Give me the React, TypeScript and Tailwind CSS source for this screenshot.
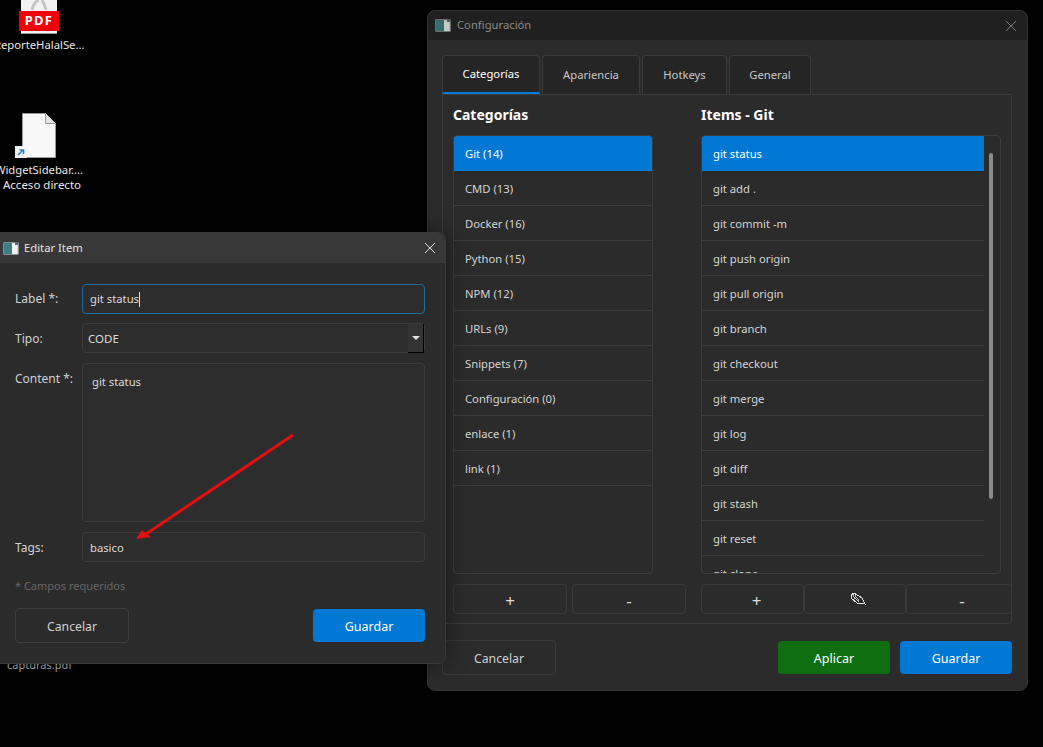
const font = "font-['Noto_Sans',sans-serif]";

const categories = ["Git (14)", "CMD (13)", "Docker (16)", "Python (15)", "NPM (12)", "URLs (9)", "Snippets (7)", "Configuración (0)", "enlace (1)", "link (1)"];
const items = ["git status", "git add .", "git commit -m", "git push origin", "git pull origin", "git branch", "git checkout", "git merge", "git log", "git diff", "git stash", "git reset", "git clone"];
const tabs = [
  { label: "Categorías", w: "w-[98px]", active: true },
  { label: "Apariencia", w: "w-[98px]", active: false },
  { label: "Hotkeys", w: "w-[85px]", active: false },
  { label: "General", w: "w-[82px]", active: false },
];

function WinIcon({ dim }: { dim?: boolean }) {
  return (
    <svg width="16" height="13" viewBox="0 0 16 13" className={dim ? "shrink-0 opacity-80" : "shrink-0"}>
      <rect x="0.5" y="0.5" width="15" height="12" fill="#d9dde0" />
      <rect x="1" y="1" width="8" height="11" fill="#3b7f84" />
      <rect x="9" y="2" width="5" height="10" fill="#f1f3f4" />
      <rect x="12" y="0" width="3" height="3" fill="#5a6a70" />
    </svg>
  );
}

function CloseX({ color }: { color: string }) {
  return (
    <svg width="12" height="12" viewBox="0 0 12 12" fill="none" stroke={color} strokeWidth="1">
      <path d="M1 1l10 10M11 1L1 11" />
    </svg>
  );
}

function Pencil() {
  return (
    <svg width="16" height="13" viewBox="0 0 16 13" fill="none" stroke="#e4e4e4" strokeWidth="1" shapeRendering="crispEdges" className="ml-[6px] mb-[5px]">
      <path d="M1 3 4 1 12 6 15 12 7 11 1 6Z" />
      <path d="M3 2 5 7M5 2.5 10 9M4 5 9 10" strokeWidth="0.8" />
    </svg>
  );
}

function ListRows({ rows, className }: { rows: string[]; className: string }) {
  return (
    <div className={className}>
      {rows.map((row, i) => (
        <div
          key={row}
          className={`flex h-[35px] shrink-0 items-center border-b pl-[11px] pt-[2px] text-[11.25px] ${
            i === 0 ? "border-[#0078d4] bg-[#0078d4] text-white" : "border-[#3c3c3c] text-[#d4d4d4]"
          }`}
        >
          {row}
        </div>
      ))}
    </div>
  );
}

function SmallButton({ className, children }: { className: string; children: React.ReactNode }) {
  return (
    <button className={`flex h-[30px] items-center justify-center rounded border border-[#3a3a3a] pt-1 text-[17px] text-[#dcdcdc] ${className}`}>
      {children}
    </button>
  );
}

function ActionButton({ label, className }: { label: string; className: string }) {
  return (
    <button className={`flex h-[33px] w-[112px] items-center justify-center rounded pt-1 text-[12.5px] text-white ${className}`}>
      {label}
    </button>
  );
}

function ConfigWindow() {
  return (
    <div className="absolute left-[427px] top-[10px] flex h-[681px] w-[601px] flex-col rounded-lg border border-[#333] bg-[#2b2b2b]">
      <div className="flex h-[29px] items-center justify-between rounded-t-lg bg-[#202020] pl-[7px] pr-[10px]">
        <div className="flex items-center gap-[6px]">
          <WinIcon dim />
          <span className="text-[11.25px] text-[#8a8a8a]">Configuración</span>
        </div>
        <CloseX color="#777" />
      </div>

      <div className="flex flex-col pl-[14px] pr-[15px] pt-[15px]">
        <div className="flex gap-[2px]">
          {tabs.map((tab) => (
            <div
              key={tab.label}
              className={`flex h-[39px] ${tab.w} items-center justify-center rounded-t border border-b-0 border-[#3a3a3a] bg-[#252525] text-[11.25px] ${
                tab.active ? "border-b-2 border-b-[#0078d4] text-white" : "text-[#c8c8c8]"
              }`}
            >
              {tab.label}
            </div>
          ))}
        </div>

        <div className="flex h-[530px] w-[570px] gap-[15px] overflow-hidden rounded-b border border-[#3c3c3c] pl-[10px] pt-[10px]">
          <div className="flex w-[233px] flex-col">
            <h2 className="h-[30px] text-sm font-bold leading-[19px] text-white">Categorías</h2>
            <ListRows
              rows={categories}
              className="flex h-[439px] w-[200px] flex-col overflow-hidden rounded border border-[#3c3c3c]"
            />
            <div className="mt-[10px] flex gap-[5px]">
              <SmallButton className="w-[114px]">+</SmallButton>
              <SmallButton className="w-[114px]">-</SmallButton>
            </div>
          </div>

          <div className="flex w-[311px] shrink-0 flex-col">
            <h2 className="h-[30px] text-sm font-bold leading-[19px] text-white">Items - Git</h2>
            <div className="relative h-[439px] w-[300px] overflow-hidden rounded border border-[#3c3c3c]">
              <ListRows rows={items} className="flex w-[282px] flex-col" />
              <div className="absolute left-[287px] top-[17px] h-[346px] w-1 rounded-full bg-[#8a8a8a]" />
            </div>
            <div className="mt-[10px] flex">
              <SmallButton className="w-[103px] pl-2">+</SmallButton>
              <SmallButton className="w-[102px]"><Pencil /></SmallButton>
              <SmallButton className="w-[106px] pl-[6px]">-</SmallButton>
            </div>
          </div>
        </div>

        <div className="mt-4 flex items-center justify-between">
          <button className="flex h-[35px] w-[114px] items-center justify-center rounded border border-[#3a3a3a] pt-1 text-[12.25px] text-[#d0d0d0]">
            Cancelar
          </button>
          <div className="flex gap-[10px]">
            <ActionButton label="Aplicar" className="bg-[#0f6e10]" />
            <ActionButton label="Guardar" className="bg-[#0078d4]" />
          </div>
        </div>
      </div>
    </div>
  );
}

function Field({ label, children, className }: { label: string; children: React.ReactNode; className: string }) {
  return (
    <div className={`flex ${className}`}>
      <span className="w-[67px] shrink-0 text-xs leading-[30px] text-[#d0d0d0]">{label}</span>
      {children}
    </div>
  );
}

function EditWindow() {
  return (
    <div className="absolute left-[-10px] top-[232px] flex h-[432px] w-[456px] flex-col rounded-lg border border-[#3a3a3a] bg-[#2b2b2b] shadow-[0_0_24px_rgba(0,0,0,0.45)]">
      <div className="flex h-[30px] items-center justify-between rounded-t-lg bg-[#383838] pl-3 pr-[9px]">
        <div className="flex items-center gap-[5px]">
          <WinIcon />
          <span className="text-[11.25px] text-[#e4e4e4]">Editar Item</span>
        </div>
        <CloseX color="#e0e0e0" />
      </div>

      <div className="flex flex-col pl-6 pr-5 pt-[21px]">
        <Field label="Label *:" className="h-[30px]">
          <div className="flex h-[30px] flex-1 items-center rounded border border-[#1c6ea4] bg-[#2d2d2d] pl-[7px] text-[11.25px] text-[#dcdcdc]">
            git status<span className="h-[15px] w-px bg-[#dcdcdc]" />
          </div>
        </Field>
        <Field label="Tipo:" className="mt-[9px] h-[30px] pt-px">
          <div className="relative mt-[-1px] flex h-[30px] flex-1 items-center rounded border border-[#3c3c3c] bg-[#2d2d2d] pl-[5px] pt-px text-[11.5px] text-[#dcdcdc]">
            CODE
            <div className="absolute right-0 top-0 flex h-[29px] w-4 items-center justify-center border-b border-r border-black bg-[#333]">
              <div className="h-0 w-0 border-x-[4px] border-t-[4px] border-x-transparent border-t-[#e0e0e0]" />
            </div>
          </div>
        </Field>
        <Field label="Content *:" className="mt-[10px] h-[159px] pt-px">
          <div className="mt-[-1px] flex-1 rounded border border-[#3c3c3c] bg-[#2d2d2d] pl-[9px] pt-[10px] text-[11.25px] text-[#dcdcdc]">
            git status
          </div>
        </Field>
        <Field label="Tags:" className="mt-[10px] h-[30px] pt-px">
          <div className="mt-[-1px] flex h-[30px] flex-1 items-center rounded border border-[#3c3c3c] bg-[#2d2d2d] pl-[7px] pt-[2px] text-[11.25px] text-[#dcdcdc]">
            basico
          </div>
        </Field>
        <p className="mt-4 text-[11px] leading-[16px] text-[#666]">* Campos requeridos</p>
        <div className="mt-[14px] flex items-center justify-between">
          <button className="flex h-[35px] w-[114px] items-center justify-center rounded border border-[#3e3e3e] pt-1 text-[12.25px] text-[#d0d0d0]">
            Cancelar
          </button>
          <ActionButton label="Guardar" className="bg-[#0078d4]" />
        </div>
      </div>
    </div>
  );
}

function DesktopIcons() {
  return (
    <>
      <div className="absolute left-[21px] top-0 h-[34px] w-[36px] border-b border-[#999] bg-[#f2f2f2]">
        <svg className="absolute left-[9px] top-0" width="18" height="11" viewBox="0 0 18 11" fill="none" stroke="#c4c4c4" strokeWidth="3">
          <path d="M2 10C3 5 6 1 9 0M16 10C15 6 14 3 12 0" />
        </svg>
        <div className="absolute left-[-2px] top-[11px] flex h-[20px] w-[40px] items-center justify-center bg-[#f00008] text-[13px] font-bold tracking-widest text-white">
          PDF
        </div>
      </div>
      <div className="absolute left-[-6px] top-[37px] whitespace-nowrap text-[11.25px] text-[#e8e8e8]">ReporteHalalSe...</div>

      <svg className="absolute left-[15px] top-[113px]" width="42" height="46" viewBox="0 0 42 46">
        <path d="M7.5.5h23l10 10v34h-33Z" fill="#f8f8f8" stroke="#9a9a9a" />
        <path d="M30.5.5v10h10" fill="#e4e4e4" stroke="#9a9a9a" />
        <rect x="0" y="33" width="12" height="12" fill="#f4f4f4" />
        <path d="M3 42l5-5M4.5 37H8.5V41" fill="none" stroke="#2a86c8" strokeWidth="1.6" />
      </svg>
      <div className="absolute left-[-5px] top-[162px] whitespace-nowrap text-[11.25px] leading-[15px] text-[#e8e8e8]">WidgetSidebar....</div>
      <div className="absolute left-[3px] top-[177px] whitespace-nowrap text-[11.5px] leading-[15px] text-[#e8e8e8]">Acceso directo</div>

      <div className="absolute left-[7px] top-[657px] text-[11px] text-[#b8b8b8]">capturas.pdf</div>
    </>
  );
}

export default function App() {
  return (
    <div className={`relative h-[747px] w-[1043px] overflow-hidden bg-black ${font}`}>
      <DesktopIcons />
      <ConfigWindow />
      <EditWindow />
      <svg className="absolute left-[130px] top-[430px]" width="170" height="112" viewBox="0 0 170 112">
        <path d="M163 5 16 104" stroke="#e01010" strokeWidth="3" fill="none" />
        <path d="M6 109 21 107 12 100Z" fill="#e01010" />
      </svg>
    </div>
  );
}
